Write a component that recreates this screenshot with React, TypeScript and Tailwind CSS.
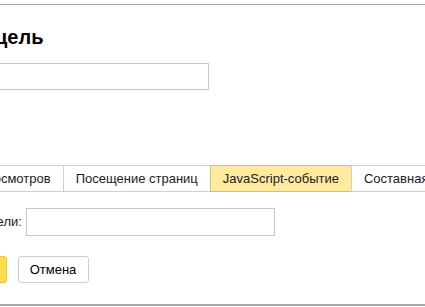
export default function App() {
  const tabs = [
    { label: "Количество просмотров", active: false },
    { label: "Посещение страниц", active: false },
    { label: "JavaScript-событие", active: true },
    { label: "Составная цель", active: false },
  ];

  return (
    <div className="w-[425px] h-[307px] overflow-hidden bg-white font-['Liberation_Sans',Arial,sans-serif] text-[13px] text-[#222]">
      <div className="h-[4px]" />
      <div className="border-t border-[#aaa]" />

      {/* Heading */}
      <h1 className="mt-[20px] ml-[-72px] h-[24px] leading-[24px] text-[20px] font-bold text-black whitespace-nowrap">
        Новая цель
      </h1>

      {/* Goal name */}
      <input
        type="text"
        className="mt-[14px] ml-[-191px] block w-[400px] h-[27px] border border-[#c8c8c8] bg-white outline-none"
      />

      {/* Goal type tabs */}
      <div className="mt-[75px] flex h-[27px] ml-[-107px] whitespace-nowrap">
        {tabs.map((t) => (
          <div
            key={t.label}
            className={
              t.active
                ? "flex items-center px-[12px] border border-[#d3bd6e] bg-[#ffeba0] -ml-px"
                : "flex items-center px-[12px] border border-[#d0d0d0] bg-white -ml-px first:ml-0"
            }
          >
            {t.label}
          </div>
        ))}
      </div>

      {/* Goal id */}
      <div className="mt-[16px] flex items-center ml-[-110px] h-[28px] whitespace-nowrap">
        <span>Идентификатор цели:</span>
        <input
          type="text"
          className="ml-[4px] block w-[249px] h-[28px] border border-[#c8c8c8] bg-white outline-none"
        />
      </div>

      {/* Actions */}
      <div className="mt-[20px] flex ml-[-111px] h-[27px]">
        <button className="h-[27px] px-[13px] rounded-[3px] border border-[#e8c53a] bg-[#ffdb4d] text-black whitespace-nowrap">
          Добавить цель
        </button>
        <button className="ml-[11px] h-[27px] w-[71px] rounded-[3px] border border-[#cfcfcf] bg-white text-black">
          Отмена
        </button>
      </div>

      <div className="mt-[21px] border-t-2 border-[#a8a8a8]" />
    </div>
  );
}
